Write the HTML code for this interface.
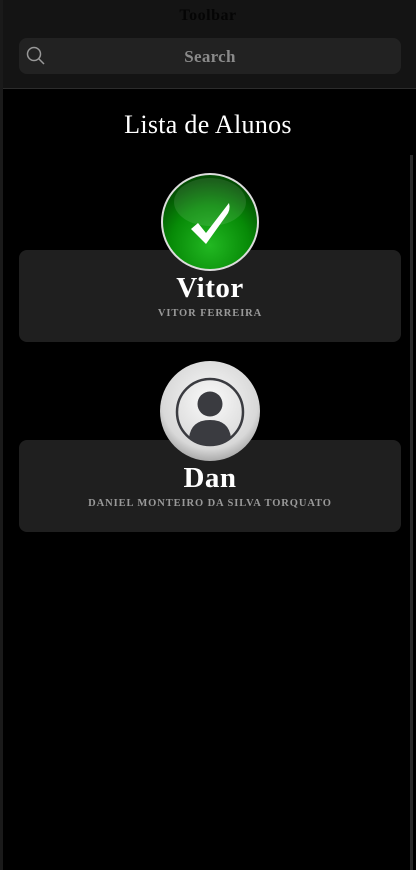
<!DOCTYPE html><html><head><style>
body{margin:0;width:416px;height:870px;background:#000;overflow:hidden;font-family:"Liberation Serif",serif;position:relative}
.hdr{position:absolute;left:0;top:0;width:416px;height:88px;background:#141414;border-bottom:1px solid #2c2c2c}
.lb{position:absolute;left:0;top:0;width:3px;height:870px;background:#1a1a1a}
.sb{position:absolute;left:410px;top:155px;width:3px;height:715px;background:#2a2a2a}
.tb{position:absolute;top:7px;width:416px;text-align:center;font-size:16px;font-weight:bold;color:#050505;letter-spacing:.5px}
.search{position:absolute;left:19px;top:38px;width:382px;height:36px;background:#222;border-radius:8px}
.search span{position:absolute;width:100%;text-align:center;top:9px;color:#8a8a8a;font-weight:bold;font-size:17px;letter-spacing:.3px}
h1{position:absolute;top:110px;width:416px;margin:0;text-align:center;color:#fff;font-weight:normal;font-size:26px;letter-spacing:.3px}
.card{position:absolute;left:19px;width:382px;height:92px;background:#1f1f1f;border-radius:8px;text-align:center}
.n{position:absolute;top:22px;width:100%;color:#fff;font-weight:bold;font-size:29px;letter-spacing:.5px}
.s{position:absolute;top:58px;width:100%;color:#999;font-weight:bold;font-size:10.5px;letter-spacing:.9px}
svg.av{position:absolute;left:160px}
</style></head><body>
<div class="hdr"><div class="tb">Toolbar</div>
<div class="search"><svg style="position:absolute;left:7px;top:8px" width="20" height="20"><circle cx="8" cy="8" r="6.5" fill="none" stroke="#999" stroke-width="1.5"/><line x1="13" y1="13" x2="18" y2="18" stroke="#999" stroke-width="1.5"/></svg><span>Search</span></div></div>
<div class="lb"></div><div class="sb"></div>
<h1>Lista de Alunos</h1>
<div class="card" style="top:250px"><div class="n">Vitor</div><div class="s">VITOR FERREIRA</div></div>
<div class="card" style="top:440px"><div class="n">Dan</div><div class="s">DANIEL MONTEIRO DA SILVA TORQUATO</div></div>
<svg class="av" style="top:172px" width="100" height="100"><defs><radialGradient id="g" cx=".5" cy=".75" r=".7"><stop offset="0" stop-color="#22b822"/><stop offset=".6" stop-color="#078a07"/><stop offset="1" stop-color="#034d03"/></radialGradient></defs>
<circle cx="50" cy="50" r="49" fill="#ddd"/><circle cx="50" cy="50" r="47" fill="url(#g)"/><ellipse cx="50" cy="30" rx="36" ry="24" fill="#fff" opacity=".1"/>
<path d="M31 57 L38 51 L46 61 L69 31 Q71 38 66 44 L46 72 Z" fill="#fff"/></svg>
<svg class="av" style="top:361px" width="100" height="100"><defs><radialGradient id="h" cx=".5" cy=".4" r=".6"><stop offset="0" stop-color="#fafafa"/><stop offset=".8" stop-color="#d8d8d8"/><stop offset="1" stop-color="#aaa"/></radialGradient></defs>
<circle cx="50" cy="50" r="50" fill="url(#h)"/><circle cx="50" cy="51" r="33" fill="none" stroke="#3a3b40" stroke-width="2.5"/><circle cx="50" cy="43" r="12.5" fill="#3a3b40"/><path d="M29 77 Q31 59 50 59 Q69 59 71 77 Q60 85 50 85 Q40 85 29 77Z" fill="#3a3b40"/></svg>
</body></html>
